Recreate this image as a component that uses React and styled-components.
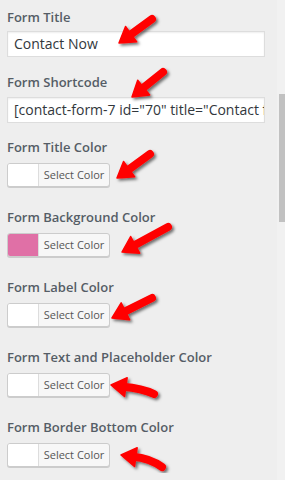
import React from "react";
import styled, { createGlobalStyle } from "styled-components";

const Global = createGlobalStyle`
  html, body { margin: 0; padding: 0; background: #eeeeee; }
  body { font-family: "Open Sans", "Noto Sans", sans-serif; }
  * { box-sizing: border-box; }
`;

const Page = styled.div`
  position: relative;
  display: flex;
  width: 285px;
  height: 480px;
  overflow: hidden;
  background: #eeeeee;
`;

const Content = styled.div`
  flex: 1;
  padding: 7px 12px 0 7px;
  display: flex;
  flex-direction: column;
`;

const Field = styled.div`
  display: flex;
  flex-direction: column;
  margin-bottom: ${(p) => p.$gap || 20}px;
`;

const Label = styled.div`
  font-size: 13px;
  font-weight: 600;
  line-height: 20px;
  color: #555d66;
  margin-bottom: ${(p) => p.$gap || 6}px;
  white-space: nowrap;
`;

const TextInput = styled.div`
  height: 26px;
  width: 258px;
  background: #fff;
  border: 1px solid #ddd;
  box-shadow: inset 0 1px 2px rgba(0, 0, 0, 0.07);
  padding: 0 6px;
  font-size: 14px;
  line-height: 24px;
  color: #32373c;
  white-space: nowrap;
  overflow: hidden;
`;

const ColorButton = styled.div`
  display: flex;
  width: 103px;
  height: 24px;
  border: 1px solid #ccc;
  border-radius: 3px;
  background: #f7f7f7;
  box-shadow: 0 1px 0 #ccc;
  overflow: hidden;
`;

const Swatch = styled.div`
  width: 31px;
  background: ${(p) => p.$color};
  border-right: 1px solid #ddd;
`;

const ButtonText = styled.div`
  flex: 1;
  font-size: 11px;
  line-height: 22px;
  color: #555;
  text-align: center;
  white-space: nowrap;
`;

const ScrollTrack = styled.div`
  width: 8px;
  background: #f1f1f1;
  display: flex;
  justify-content: flex-end;
`;

const ScrollThumb = styled.div`
  width: 6px;
  height: 128px;
  margin-top: 94px;
  background: #c1c1c1;
`;

const Overlay = styled.svg`
  position: absolute;
  left: 0;
  top: 0;
  pointer-events: none;
  overflow: visible;
`;

const colorFields = [
  { label: "Form Title Color", color: "#ffffff" },
  { label: "Form Background Color", color: "#e070a6" },
  { label: "Form Label Color", color: "#ffffff" },
  { label: "Form Text and Placeholder Color", color: "#ffffff" },
  { label: "Form Border Bottom Color", color: "#ffffff" },
];

const arrows = [
  { tip: [119, 43], tail: [152, 19] },
  { tip: [132, 97], tail: [163, 72] },
  { tip: [117, 178], tail: [150, 154] },
  { tip: [122, 252], tail: [168, 227] },
  { tip: [112, 318], tail: [152, 298] },
  { tip: [111, 385], tail: [154, 394], curved: true },
  { tip: [121, 455], tail: [162, 467], curved: true },
];

function Arrow({ tip, tail, curved }) {
  const [tx, ty] = tip;
  const [sx, sy] = tail;
  const L = 15;
  const W = 9.5;
  let dx, dy;
  if (curved) {
    dx = -14;
    dy = -2;
  } else {
    dx = tx - sx;
    dy = ty - sy;
  }
  const len = Math.hypot(dx, dy);
  dx /= len;
  dy /= len;
  const nx = -dy;
  const ny = dx;
  const bx = tx - dx * L;
  const by = ty - dy * L;
  const head = `${tx},${ty} ${bx + nx * W},${by + ny * W} ${bx - nx * W},${by - ny * W}`;
  const ex = bx + dx * 3;
  const ey = by + dy * 3;
  let shaft;
  if (curved) {
    const cx = sx - 12;
    const cy = by + 1;
    shaft = `M ${sx} ${sy} Q ${cx} ${cy} ${ex} ${ey}`;
  } else {
    shaft = `M ${sx} ${sy} L ${ex} ${ey}`;
  }
  return (
    <g filter="url(#arrowShadow)">
      <path d={shaft} stroke="#ff0000" strokeWidth="8" strokeLinecap="round" fill="none" />
      <polygon points={head} fill="#ff0000" stroke="#ff0000" strokeWidth="1.5" strokeLinejoin="round" />
    </g>
  );
}

export default function App() {
  return (
    <>
      <Global />
      <Page>
        <Content>
          <Field $gap={15}>
            <Label $gap={4}>Form Title</Label>
            <TextInput>Contact Now</TextInput>
          </Field>
          <Field $gap={14}>
            <Label $gap={5}>Form Shortcode</Label>
            <TextInput>[contact-form-7 id="70" title="Contact form 1"]</TextInput>
          </Field>
          {colorFields.map((f) => (
            <Field key={f.label}>
              <Label>{f.label}</Label>
              <ColorButton>
                <Swatch $color={f.color} />
                <ButtonText>Select Color</ButtonText>
              </ColorButton>
            </Field>
          ))}
        </Content>
        <ScrollTrack>
          <ScrollThumb />
        </ScrollTrack>
        <Overlay width="285" height="480" viewBox="0 0 285 480">
          <defs>
            <filter id="arrowShadow" x="-30%" y="-30%" width="160%" height="160%">
              <feDropShadow dx="2" dy="2" stdDeviation="1.5" floodColor="#000" floodOpacity="0.55" />
            </filter>
          </defs>
          {arrows.map((a, i) => (
            <Arrow key={i} {...a} />
          ))}
        </Overlay>
      </Page>
    </>
  );
}
